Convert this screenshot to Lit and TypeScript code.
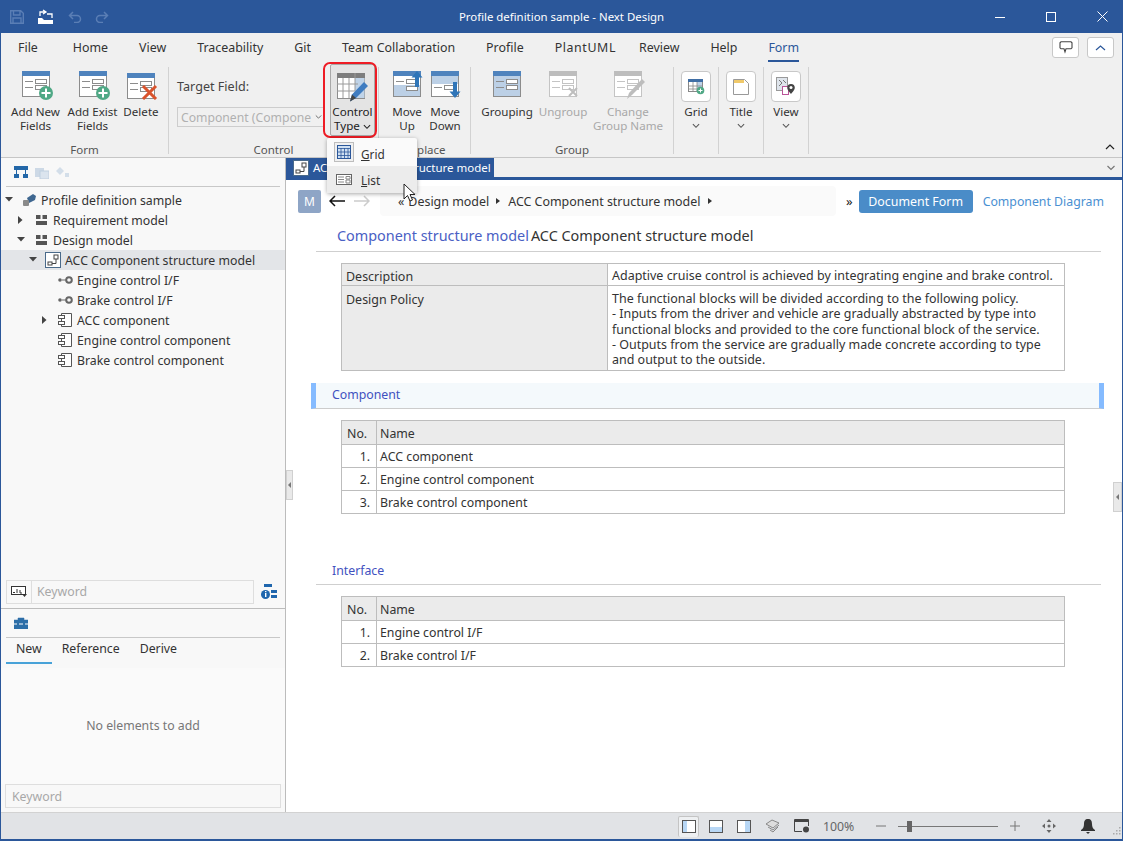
import { LitElement, html, css, svg } from "lit";
import { customElement } from "lit/decorators.js";

const formBase = (h: string, body: string, dim = false) => {
  const s = dim ? "#c4c4c4" : "#8c8c8c";
  return svg`<rect x=".5" y=".5" width="27" height="25" fill=${body} stroke=${s}/><rect x="0" y="0" width="28" height="5" fill=${h}/>
  <path d="M3 10.500h8M3 16.500h8" stroke=${s}/><rect x="13.500" y="8.500" width="11" height="4" fill="#fff" stroke=${s}/><rect x="13.500" y="14.500" width="11" height="4" fill="#fff" stroke=${s}/>`;
};
const plus = svg`<circle cx="24" cy="22" r="7" fill="#4fa885"/><path d="M24 17.500v9M19.500 22h9" stroke="#fff" stroke-width="2"/>`;
const icons: Record<string, unknown> = {
  addNew: html`<svg width="32" height="29" viewBox="0 0 32 29">${formBase("#4f83bd", "#fff")}${plus}</svg>`,
  addExist: html`<svg width="32" height="29" viewBox="0 0 32 29">${formBase("#4f83bd", "#fff")}${plus}</svg>`,
  del: html`<svg width="32" height="29" viewBox="0 0 32 29"><g transform="translate(0 2)">${formBase("#4f83bd", "#fff")}<path d="M16 13l13 13M29 13L16 26" stroke="#d9532c" stroke-width="3"/></g></svg>`,
  ctrl: html`<svg width="32" height="29" viewBox="0 0 32 29"><rect x=".5" y=".5" width="27" height="25" fill="#fff" stroke="#8d8d8d"/><rect width="28" height="5" fill="#7d7d7d"/><rect x="18" y="5" width="9.500" height="20" fill="#bfd3e8"/><path d="M0 11h21M0 18h18M6 5v20M12 5v20M18 0v18" stroke="#9a9a9a"/><path d="M13 28.500l2-7L27 9l4 4-12 12z" fill="#3f7cc0"/><path d="M13 28.500l2-7 4 3.500z" fill="#444"/></svg>`,
  up: html`<svg width="32" height="29" viewBox="0 0 32 29">${formBase("#4f83bd", "#fff")}<rect x="1" y="14" width="26" height="11" fill="#bcd0e6"/><rect x="13.500" y="15.500" width="11" height="4" fill="#fff" stroke="#8c8c8c"/><path d="M24 0l5.500 6.500h-3.500V16h-4V6.500H18.500z" fill="#2f75b8"/></svg>`,
  down: html`<svg width="32" height="29" viewBox="0 0 32 29">${formBase("#4f83bd", "#fff")}<rect x="1" y="5" width="26" height="8" fill="#bcd0e6"/><path d="M24 27l5.500-6.500h-3.500V11h-4v9.500H18.500z" fill="#2f75b8"/></svg>`,
  grp: html`<svg width="32" height="29" viewBox="0 0 32 29">${formBase("#4f83bd", "#bcd0e6")}</svg>`,
  ungrp: html`<svg width="32" height="29" viewBox="0 0 32 29">${formBase("#bdbdbd", "#fff", true)}<path d="M20 17l8 8M28 17l-8 8" stroke="#bdbdbd" stroke-width="2"/></svg>`,
  rename: html`<svg width="32" height="29" viewBox="0 0 32 29">${formBase("#bdbdbd", "#fff", true)}<path d="M13 28l2-6L28 8l3 3-13 13z" fill="#bdbdbd"/></svg>`,
  grid: html`<svg width="17" height="16" viewBox="0 0 17 16"><rect x=".5" y=".5" width="14" height="12" fill="#fff" stroke="#888"/><rect width="15" height="3" fill="#3f6ea5"/><rect x="9" y="3" width="5" height="9" fill="#bcd3ea"/><path d="M5 3v10M9 3v10M0 7h14M0 10h14" stroke="#888" stroke-width=".8"/><circle cx="12.500" cy="11.500" r="3.800" fill="#4fa885"/><path d="M12.500 9.500v4M10.500 11.500h4" stroke="#fff"/></svg>`,
  title: html`<svg width="16" height="16" viewBox="0 0 16 16"><path d="M.5.5h11l4 4v11H.5z" fill="#fff" stroke="#999"/><rect x="1" y="1" width="10" height="3" fill="#f0c96a"/></svg>`,
  view: html`<svg width="20" height="20" viewBox="0 0 20 20"><rect x=".5" y=".5" width="11" height="13" fill="#dfe5ec" stroke="#999"/><path d="M3 3l3 3-3 3M7 3l3 3" fill="none" stroke="#777"/><rect x="6.500" y="9.500" width="6" height="8" fill="#fff" stroke="#b59"/><path d="M15 7a3.800 3.800 0 0 1 3.800 3.800C18.800 13 15 17 15 17s-3.800-4-3.800-6.200A3.800 3.800 0 0 1 15 7z" fill="#444"/><circle cx="15" cy="10.500" r="1.500" fill="#fff"/></svg>`,
};

const groups = [
  { name: "Form", w: 168, pad: 6, items: [
    { t: ["Add New", "Fields"], i: "addNew", w: 57 }, { t: ["Add Exist", "Fields"], i: "addExist", w: 57 }, { t: ["Delete"], i: "del", w: 40 } ] },
  { name: "Control", w: 210, pad: 0, control: true, items: [] as any[] },
  { name: "Replace", w: 92, pad: 9, items: [ { t: ["Move", "Up"], i: "up", w: 38 }, { t: ["Move", "Down"], i: "down", w: 38 } ] },
  { name: "Group", w: 203, pad: 10, items: [ { t: ["Grouping"], i: "grp", w: 52 }, { t: ["Ungroup"], i: "ungrp", w: 60, dim: true }, { t: ["Change", "Group Name"], i: "rename", w: 70, dim: true } ] },
  { name: "", w: 45, pad: 0, boxed: { t: "Grid", i: "grid" }, items: [] },
  { name: "", w: 45, pad: 0, boxed: { t: "Title", i: "title" }, items: [] },
  { name: "", w: 45, pad: 0, boxed: { t: "View", i: "view" }, items: [] },
];

const chev = (c = "#333", w = 9) => html`<svg width=${w} height="6" viewBox="0 0 9 6"><path d="M1 1l3.500 3.500L8 1" fill="none" stroke=${c} stroke-width="1.200"/></svg>`;

const modelIcon = html`<svg width="13" height="12" viewBox="0 0 13 12"><path d="M1 1h4.500v4H1zM7.500 1H12v4H7.500zM1 7h11v4H1z" fill="#555"/></svg>`;
const ifaceIcon = html`<svg width="15" height="8" viewBox="0 0 15 8"><circle cx="2" cy="4" r="1.800" fill="#666"/><path d="M4 4h4" stroke="#666"/><circle cx="11" cy="4" r="2.800" fill="none" stroke="#666" stroke-width="2"/></svg>`;
const compIcon = html`<svg width="16" height="16" viewBox="0 0 16 16"><path d="M4.500 1.500h10v13h-10z" fill="#fff" stroke="#555"/><rect x="1.500" y="3.500" width="6" height="3" fill="#fff" stroke="#555"/><rect x="1.500" y="9.500" width="6" height="3" fill="#fff" stroke="#555"/></svg>`;
const diagIcon = html`<svg width="16" height="16" viewBox="0 0 16 16"><rect x=".5" y=".5" width="15" height="15" fill="#fff" stroke="#4a6a8a"/><rect x="9" y="3" width="4" height="4" fill="none" stroke="#444"/><rect x="3" y="10" width="4" height="3" fill="none" stroke="#444"/><path d="M11 7v4.500H7" fill="none" stroke="#444"/></svg>`;
const profIcon = html`<svg width="15" height="14" viewBox="0 0 15 14"><path d="M5 5l6-4 3 2-1 4-6 3z" fill="#3f6790"/><rect x="1" y="7" width="6" height="6" rx="1" fill="#8a8a8a"/></svg>`;

const tree = [
  { t: "Profile definition sample", d: 0, a: "down", ic: profIcon },
  { t: "Requirement model", d: 1, a: "right", ic: modelIcon },
  { t: "Design model", d: 1, a: "down", ic: modelIcon },
  { t: "ACC Component structure model", d: 2, a: "down", ic: diagIcon, sel: true },
  { t: "Engine control I/F", d: 3, a: "", ic: ifaceIcon },
  { t: "Brake control I/F", d: 3, a: "", ic: ifaceIcon },
  { t: "ACC component", d: 3, a: "right", ic: compIcon },
  { t: "Engine control component", d: 3, a: "", ic: compIcon },
  { t: "Brake control component", d: 3, a: "", ic: compIcon },
];

const tabs = ["File", "Home", "View", "Traceability", "Git", "Team Collaboration", "Profile", "PlantUML", "Review", "Help", "Form"];

@customElement("app-root")
export class AppRoot extends LitElement {
  static styles = css`
    :host { display: block; position: relative; width: 1123px; height: 841px; overflow: hidden; background: #fff; color: #222;
      font-family: "Noto Sans", "Open Sans", sans-serif; font-size: 12.300px; box-sizing: border-box; }
    .app { display: flex; flex-direction: column; height: 841px; border-left: 1px solid #2b579a; border-right: 1px solid #2b579a; border-bottom: 2px solid #2b579a; box-sizing: border-box; }
    .title { height: 33px; margin: 0 -1px; background: #2b579a; color: #fff; display: grid; grid-template-columns: 1fr auto 1fr; align-items: center; flex: none; font-size: 11.400px; }
    .qat { display: flex; gap: 13px; padding-left: 10px; align-items: center; }
    .win { display: flex; justify-content: flex-end; gap: 29px; padding-right: 15px; align-items: center; }
    .tabs { height: 29px; background: #f0f0f0; display: flex; align-items: center; flex: none; position: relative; padding-left: 17px; font-size: 12.400px; }
    .tab { margin-right: 31px; position: relative; height: 29px; line-height: 29px; color: #333; }
    .tab.first { margin-right: 35px; }
    .tab.pu { letter-spacing: .6px; margin-right: 23px; }
    .tab.on { color: #2b579a; }
    .tab.on::after { content: ""; position: absolute; left: 0; right: 0; bottom: 0; height: 2px; background: #2b579a; }
    .tr-btns { margin-left: auto; display: flex; gap: 8px; padding-right: 8px; }
    .tr-btn { width: 25px; height: 19px; background: #fff; border: 1px solid #c8c8c8; border-radius: 3px; display: flex; align-items: center; justify-content: center; }
    .ribbon { height: 96px; background: #f0f0f0; border-bottom: 1px solid #c6c6c6; display: flex; flex: none; position: relative; box-sizing: border-box; padding-top: 5px; }
    .group { display: flex; flex-direction: column; border-right: 1px solid #d2d2d2; box-sizing: border-box; height: 87px; flex: none; }
    .g-body { flex: 1; display: flex; align-items: flex-start; }
    .g-label { height: 8px; line-height: 8px; text-align: center; color: #555; font-size: 11.500px; margin-bottom: 0; }
    .rb { display: flex; flex-direction: column; align-items: center; padding-top: 4px; line-height: 14px; text-align: center; flex: none; white-space: nowrap; color: #333; font-size: 11.600px; }
    .rb svg { margin: 0 0 5px 4px; height: 29px; }
    .rb.dim { color: #a8a8a8; }
    .field { width: 150px; margin-left: 8px; flex: none; }
    .field-l { height: 40px; line-height: 40px; color: #444; font-size: 12.600px; }
    .select { height: 20px; width: 148px; border: 1px solid #cdcdcd; color: #b0b0b0; display: flex; align-items: center; justify-content: space-between; padding: 0 2px 0 3px; box-sizing: border-box; white-space: nowrap; overflow: hidden; font-size: 12.200px; }
    .ctrl { width: 45px; height: 72px; margin-left: 3px; border: 1px solid #a8a8a8; background: #e4e4e4; border-radius: 2px; box-sizing: border-box; padding-top: 8px; margin-top: -3px; display: flex; flex-direction: column; align-items: center; line-height: 14px; text-align: center; font-size: 11.600px; white-space: nowrap; }
    .ctrl-ic { display: block; height: 32px; }
    .boxed { width: 100%; display: flex; flex-direction: column; align-items: center; padding-top: 4px; font-size: 11.600px; line-height: 14px; color: #333; }
    .box { width: 28px; height: 29px; background: #fff; border: 1px solid #c8c8c8; border-radius: 4px; display: flex; align-items: center; justify-content: center; margin-bottom: 3px; }
    .boxed .c { margin-top: 0; height: 14px; display: flex; align-items: center; }
    .r-col { position: absolute; right: 7px; bottom: 3px; }
    .main { flex: 1; display: flex; min-height: 0; }
    .left { width: 284px; flex: none; border-right: 1px solid #bcbcbc; background: #f8f8f8; display: flex; flex-direction: column; }
    .l-tools { height: 28px; margin: 0 5px; border-bottom: 1px solid #c8c8c8; display: flex; align-items: center; gap: 7px; padding-left: 8px; flex: none; }
    .tree { height: 390px; padding-top: 3px; flex: none; box-sizing: content-box; margin-bottom: -1px; }
    .row { height: 20px; display: flex; align-items: center; white-space: nowrap; color: #333; }
    .row.sel { background: #e3e5e8; }
    .arr { width: 12px; height: 12px; margin-right: 5px; display: flex; align-items: center; justify-content: center; flex: none; }
    .ic { width: 18px; display: flex; align-items: center; justify-content: center; flex: none; margin-right: 3px; }
    .sbar { display: flex; align-items: center; height: 25px; padding-left: 5px; flex: none; }
    .kw { flex: none; height: 24px; border: 1px solid #dedede; box-sizing: border-box; display: flex; align-items: center; color: #a8a8a8; background: #f8f8f8; }
    .kw .abc { width: 24px; height: 22px; border-right: 1px solid #dedede; display: flex; align-items: center; justify-content: center; margin-right: 5px; }
    .splitter { height: 4px; border-bottom: 1px solid #bcbcbc; flex: none; box-sizing: content-box; }
    .ltabs { display: flex; margin: 0 5px; height: 26px; flex: none; }
    .ltab { padding: 0 10px; line-height: 22px; color: #333; }
    .ltab.on { border-bottom: 2px solid #48a2d8; box-sizing: border-box; height: 26px; }
    .empty { flex: 1; background: #fafafa; margin: 4px 0 0 0; color: #777; display: flex; align-items: center; justify-content: center; padding-bottom: 2px; }
    .kw2 { height: 24px; margin: 0 4px 4px 4px; border: 1px solid #dedede; box-sizing: border-box; color: #a8a8a8; display: flex; align-items: center; padding: 1px 0 0 6px; flex: none; }
    .doc { flex: 1; min-width: 0; display: flex; flex-direction: column; position: relative; }
    .dstrip { background: #f0f0f0; border-bottom: 3px solid #2b579a; box-sizing: content-box; display: flex; flex: none; height: 19px; }
    .dtab { width: 208px; background: #2b579a; color: #fff; display: flex; align-items: center; padding-left: 7px; gap: 2px; box-sizing: border-box; font-size: 11.500px; white-space: nowrap; height: 19px; }
    .dtab span { margin-left: 2px; }
    .dchev { margin-left: auto; padding: 0 6px; display: flex; align-items: center; }
    .nav { height: 30px; margin-top: 6px; display: flex; align-items: center; flex: none; }
    .m { width: 23px; height: 23px; margin-left: 12px; background: #8ea5c6; color: #fff; border-radius: 2px; text-align: center; line-height: 23px; font-size: 12px; }
    .arrows { display: flex; gap: 9px; margin: 0 10px 0 8px; }
    .crumb { width: 456px; height: 30px; background: #fafafa; border-radius: 4px; display: flex; align-items: center; padding-left: 18px; box-sizing: border-box; gap: 4px; color: #333; white-space: nowrap; font-size: 12.450px; }
    .tri { width: 0; height: 0; border-left: 4px solid #333; border-top: 3px solid transparent; border-bottom: 3px solid transparent; margin: 0 4px 0 3px; }
    .raquo { margin: 0 6px 0 10px; font-size: 13px; }
    .docbtn { width: 114px; height: 23px; background: #4a8cc8; border-radius: 3px; color: #fff; text-align: center; line-height: 23px; font-size: 12.400px; }
    .diag { margin-left: 10px; color: #4a90d2; font-size: 12.300px; white-space: nowrap; }
    .h1 { margin: 0 21px 0 30px; padding: 9px 0 5px 21px; border-bottom: 1px solid #cfcfcf; font-size: 14.400px; line-height: 21px; flex: none; display: flex; gap: 2px; color: #333; white-space: nowrap; }
    .h1 .a { color: #4a60c4; }
    table { border-collapse: collapse; margin-left: 55px; width: 724px; table-layout: fixed; font-size: 12.350px; flex: none; color: #333; }
    td { border: 1px solid #bdbdbd; padding: 0 4px; vertical-align: top; line-height: 15.200px; }
    td.h { background: #ebebeb; }
    .t1 { margin-top: 11px; font-size: 12.470px; }
    .t1 td { padding-top: 4px; padding-bottom: 2px; }
    .t1 td.h { padding-top: 5px; padding-bottom: 1px; }
    .t1 tr + tr td { padding-top: 5px; padding-bottom: 3px; }
    .t1 tr + tr td.h { padding-top: 6px; }
    .t2 td { height: 23px; box-sizing: border-box; padding: 0 3px; vertical-align: middle; }
    .t2 td.h { height: 24px; padding-top: 1px; }
    .t2 td.n { text-align: right; padding-right: 6px; }
    .t2 td.no { padding-left: 5px; }
    .sec { margin: 12px 18px 0 25px; height: 26px; background: #f4f9fc; border-left: 5px solid #85bbff; border-right: 5px solid #85bbff; border-bottom: 1px solid #ccc; box-sizing: border-box; line-height: 23px; padding-left: 16px; color: #3f51c0; flex: none; }
    .t-a { margin-top: 11px; }
    .sec2 { margin: 45px 21px 0 30px; border-bottom: 1px solid #cfcfcf; box-sizing: content-box; line-height: 24px; padding-left: 16px; color: #3f51c0; flex: none; height: 25px; }
    .t-b { margin-top: 11px; }
    .grab { position: absolute; width: 7px; height: 30px; background: #e9e9e9; border: 1px solid #d0d0d0; box-sizing: border-box; display: flex; align-items: center; justify-content: center; }
    .grab i { width: 0; height: 0; border-right: 3px solid #777; border-top: 3px solid transparent; border-bottom: 3px solid transparent; }
    .g1 { left: 0; top: 312px; }
    .g2 { right: 0; top: 324px; width: 9px; }
    .status { height: 27px; background: #e1e3e6; display: flex; align-items: center; flex: none; border-top: 1px solid #d2d2d2; box-sizing: border-box; position: relative; padding-left: 677px; color: #555; }
    .act { width: 21px; height: 21px; background: #eef0f2; border: 1px solid #c4c4c4; border-bottom: none; border-radius: 2px; box-sizing: border-box; display: flex; align-items: center; justify-content: center; margin-right: 3px; }
    .st-i { display: flex; align-items: center; justify-content: center; flex: none; }
    .w28 { width: 28px; }
    .w30 { width: 30px; }
    .w27 { width: 27px; }
    .w14 { width: 14px; margin-left: 15px; }
    .pct { margin-left: 8px; width: 36px; color: #666; }
    .track { width: 100px; height: 1px; background: #777; position: relative; margin-left: 10px; }
    .thumb { position: absolute; left: 9px; top: -5px; width: 5px; height: 11px; background: #666; }
    .ml12 { margin-left: 12px; }
    .ml22 { margin-left: 22px; }
    .ml25 { margin-left: 25px; }
    .grip { margin-left: 18px; margin-top: 10px; }
    .hl { position: absolute; left: 323px; top: 62px; width: 54px; height: 76px; border: 2px solid #ee1c25; border-radius: 7px; box-sizing: border-box; pointer-events: none; }
    .menu { position: absolute; left: 327px; top: 138px; width: 90px; height: 55px; background: #fafafa; box-shadow: 0 1px 4px rgba(0,0,0,.35); border-radius: 2px; display: flex; flex-direction: column; }
    .mi { height: 28px; display: flex; align-items: center; font-size: 11.800px; color: #333; }
    .mi:first-child span:last-child { padding-top: 3px; }
    .mi:nth-child(2) { background: #ececec; height: 27px; }
    .mi-ic { width: 20px; height: 20px; margin: 0 7px 0 7px; display: flex; align-items: center; justify-content: center; box-sizing: border-box; }
    .mi-ic.on { background: #f0f0f0; border: 1px solid #bdbdbd; }
    .cursor { position: absolute; left: 403px; top: 183px; }
  `;

  private group(g: any) {
    return html`<div class="group" style="width:${g.w}px">
      <div class="g-body" style="padding-left:${g.pad}px">
        ${g.control ? html`<div class="field"><div class="field-l">Target Field:</div><div class="select"><span>Component (Compone</span>${chev("#666", 7)}</div></div>
          <div class="ctrl"><span class="ctrl-ic">${icons.ctrl}</span><span>Control</span><span>Type ${chev("#222", 8)}</span></div>` : ""}
        ${g.items.map((b: any) => html`<div class="rb ${b.dim ? "dim" : ""}" style="width:${b.w}px">${icons[b.i]}${b.t.map((l: string) => html`<span>${l}</span>`)}</div>`)}
        ${g.boxed ? html`<div class="boxed"><div class="box">${icons[g.boxed.i]}</div><span>${g.boxed.t}</span><span class="c">${chev("#555", 8)}</span></div>` : ""}
      </div>
      <div class="g-label">${g.name}</div>
    </div>`;
  }

  render() {
    return html`<div class="app">
      <div class="title">
        <div class="qat">
          <svg width="14" height="14" viewBox="0 0 14 14"><path d="M.7.7h10l2.600 2.600v10H.7zM3.500 1v4h6.500V1M3 13V8h8v5" fill="none" stroke="#5a7eb5" stroke-width="1.400"/></svg>
          <svg width="18" height="16" viewBox="0 0 18 16"><path d="M1 9h4l2 2h9v4H1z" fill="#fff"/><path d="M3 7V3h5M6 1l3 2-3 2M10 5h5v4" fill="none" stroke="#fff" stroke-width="1.300"/></svg>
          <svg width="14" height="12" viewBox="0 0 14 12"><path d="M5 1L1.500 4.500 5 8M2 4.500h7a3.500 3.500 0 0 1 0 7H6" fill="none" stroke="#5a7eb5" stroke-width="1.500"/></svg>
          <svg width="14" height="12" viewBox="0 0 14 12"><path d="M9 1l3.500 3.500L9 8M12 4.500H5a3.500 3.500 0 0 0 0 7h3" fill="none" stroke="#5a7eb5" stroke-width="1.500"/></svg>
        </div>
        <div>Profile definition sample - Next Design</div>
        <div class="win">
          <svg width="10" height="10" viewBox="0 0 10 10"><path d="M0 5.500h10" stroke="#fff"/></svg>
          <svg width="34" height="10" viewBox="0 0 34 10"><rect x="12.500" y=".5" width="9" height="9" fill="none" stroke="#fff"/></svg>
          <svg width="11" height="11" viewBox="0 0 11 11"><path d="M.5.5l10 10M10.500.5l-10 10" stroke="#fff"/></svg>
        </div>
      </div>
      <div class="tabs">
        ${tabs.map((t, i) => html`<div class="tab ${i === 0 ? "first" : ""} ${t === "Form" ? "on" : ""} ${t === "PlantUML" ? "pu" : ""}">${t}</div>`)}
        <div class="tr-btns">
          <div class="tr-btn"><svg width="14" height="13" viewBox="0 0 14 13"><path d="M2 .8h10l1 1v5l-1 1H7L6 11 5 7.800H2l-1-1v-5z" fill="none" stroke="#444" stroke-width="1.100"/></svg></div>
          <div class="tr-btn"><svg width="11" height="6" viewBox="0 0 11 6"><path d="M1 5l4.500-4L10 5" fill="none" stroke="#2b579a" stroke-width="1.200"/></svg></div>
        </div>
      </div>
      <div class="ribbon">
        ${groups.map((g) => this.group(g))}
        <div class="r-col"><svg width="10" height="6" viewBox="0 0 10 6"><path d="M1 5l4-4 4 4" fill="none" stroke="#222" stroke-width="1.200"/></svg></div>
      </div>
      <div class="main">
        <div class="left">
          <div class="l-tools">
            <svg width="14" height="12" viewBox="0 0 14 12"><path d="M0 0h14v4H0zM0 8h5v4H0zM9 8h5v4H9zM2 4h1v4H2zM11 4h1v4h-1z" fill="#2367a8"/></svg>
            <svg width="14" height="13" viewBox="0 0 14 13"><rect x="0" y="2" width="9" height="9" fill="#cdd9e6"/><rect x="5" y="5" width="9" height="8" fill="#dbe4ee" stroke="#c0cfdf"/></svg>
            <svg width="14" height="13" viewBox="0 0 14 13"><path d="M0 5l4-4 4 4-4 4zM9 7h4v4H9z" fill="#d3dee9"/></svg>
          </div>
          <div class="tree">
            ${tree.map((r) => html`<div class="row ${r.sel ? "sel" : ""}" style="padding-left:${2 + r.d * 12}px">
              <span class="arr">${r.a === "down" ? html`<svg width="9" height="6" viewBox="0 0 9 6"><path d="M0 0h8L4 4.500z" fill="#444"/></svg>` : r.a === "right" ? html`<svg width="6" height="9" viewBox="0 0 6 9"><path d="M0 0l4.500 4L0 8z" fill="#444"/></svg>` : ""}</span>
              <span class="ic">${r.ic}</span><span>${r.t}</span></div>`)}
          </div>
          <div class="sbar">
            <div class="kw" style="width:248px"><span class="abc"><svg width="16" height="11" viewBox="0 0 16 11"><rect x=".5" y=".5" width="14" height="8" fill="#fff" stroke="#333"/><path d="M2 6.500h2M6 3v4M9 4v3h2" stroke="#333" fill="none"/><path d="M11 8h5l-2.500 3z" fill="#333"/></svg></span>Keyword</div>
            <svg width="16" height="16" viewBox="0 0 16 16" style="margin-left:7px"><path d="M3 0h8v3H3zM10 6h6v3h-6zM10 11h6v3h-6z" fill="#1f66ad"/><circle cx="4.500" cy="10.500" r="4.500" fill="#1f66ad"/><rect x="4" y="9" width="1.400" height="4" fill="#fff"/><rect x="4" y="7" width="1.400" height="1.200" fill="#fff"/></svg>
          </div>
          <div class="splitter"></div>
          <div class="l-tools"><svg width="14" height="12" viewBox="0 0 14 12"><path d="M4 3V1h6v2M0 3h14v9H0z" fill="#2d6fa8" stroke="#2d6fa8" stroke-width=".5"/><path d="M0 7h3M5 7h4M11 7h3" stroke="#fff"/></svg></div>
          <div class="ltabs"><div class="ltab on">New</div><div class="ltab">Reference</div><div class="ltab">Derive</div></div>
          <div class="empty">No elements to add</div>
          <div class="kw2">Keyword</div>
        </div>
        <div class="doc">
          <div class="dstrip">
            <div class="dtab">${diagIcon}<span>ACC Component structure model</span></div>
            <span class="dchev">${chev("#777", 10)}</span>
          </div>
          <div class="nav">
            <div class="m">M</div>
            <div class="arrows">
              <svg width="16" height="12" viewBox="0 0 16 12"><path d="M6 1L1 6l5 5M1 6h15" fill="none" stroke="#111" stroke-width="1.500"/></svg>
              <svg width="16" height="12" viewBox="0 0 16 12"><path d="M10 1l5 5-5 5M15 6H0" fill="none" stroke="#ccc" stroke-width="1.500"/></svg>
            </div>
            <div class="crumb"><span>«</span><span>Design model</span><i class="tri"></i><span>ACC Component structure model</span><i class="tri"></i></div>
            <span class="raquo">»</span>
            <div class="docbtn">Document Form</div>
            <div class="diag">Component Diagram</div>
          </div>
          <div class="h1"><span class="a">Component structure model</span><span>ACC Component structure model</span></div>
          <table class="t1"><colgroup><col style="width:266px"/><col/></colgroup>
            <tr><td class="h">Description</td><td>Adaptive cruise control is achieved by integrating engine and brake control.</td></tr>
            <tr><td class="h">Design Policy</td><td>The functional blocks will be divided according to the following policy.<br/>- Inputs from the driver and vehicle are gradually abstracted by type into functional blocks and provided to the core functional block of the service.<br/>- Outputs from the service are gradually made concrete according to type and output to the outside.</td></tr>
          </table>
          <div class="sec">Component</div>
          <table class="t2 t-a"><colgroup><col style="width:35px"/><col/></colgroup>
            <tr><td class="h no">No.</td><td class="h">Name</td></tr>
            <tr><td class="n">1.</td><td>ACC component</td></tr>
            <tr><td class="n">2.</td><td>Engine control component</td></tr>
            <tr><td class="n">3.</td><td>Brake control component</td></tr>
          </table>
          <div class="sec2">Interface</div>
          <table class="t2 t-b"><colgroup><col style="width:35px"/><col/></colgroup>
            <tr><td class="h no">No.</td><td class="h">Name</td></tr>
            <tr><td class="n">1.</td><td>Engine control I/F</td></tr>
            <tr><td class="n">2.</td><td>Brake control I/F</td></tr>
          </table>
          <div class="grab g1"><i></i></div>
          <div class="grab g2"><i></i></div>
        </div>
      </div>
      <div class="status">
        <div class="act"><svg width="14" height="13" viewBox="0 0 14 13"><rect x=".5" y=".5" width="13" height="12" fill="#fff" stroke="#555"/><rect x="1" y="1" width="4" height="11" fill="#b8d7f5"/></svg></div>
        <span class="st-i w28"><svg width="14" height="13" viewBox="0 0 14 13"><rect x=".5" y=".5" width="13" height="12" fill="#fff" stroke="#555"/><rect x="1" y="7" width="12" height="5" fill="#b8d7f5"/></svg></span>
        <span class="st-i w28"><svg width="14" height="13" viewBox="0 0 14 13"><rect x=".5" y=".5" width="13" height="12" fill="#fff" stroke="#555"/><rect x="8" y="1" width="5" height="11" fill="#b8d7f5"/></svg></span>
        <span class="st-i w30"><svg width="16" height="14" viewBox="0 0 16 14"><path d="M1 5l6-4 7 3-6 5z" fill="#ddd" stroke="#888"/><path d="M3 8l5 3 6-5M5 11l3 2 5-5" fill="none" stroke="#888"/></svg></span>
        <span class="st-i w27"><svg width="16" height="14" viewBox="0 0 16 14"><path d="M8 12.500H.5V.5h14V7" fill="none" stroke="#444"/><rect x="1" y="1" width="13" height="2" fill="#444"/><circle cx="12" cy="10.500" r="3" fill="#444"/></svg></span>
        <span class="pct">100%</span>
        <span class="st-i w14"><svg width="10" height="2" viewBox="0 0 10 2"><path d="M0 1h10" stroke="#777"/></svg></span>
        <div class="track"><div class="thumb"></div></div>
        <span class="st-i ml12"><svg width="10" height="10" viewBox="0 0 10 10"><path d="M0 5h10M5 0v10" stroke="#777"/></svg></span>
        <span class="st-i ml22"><svg width="14" height="14" viewBox="0 0 14 14"><path d="M7 0l2.500 3h-5zM7 14l2.500-3h-5zM0 7l3-2.500v5zM14 7l-3-2.500v5z" fill="#666"/><circle cx="7" cy="7" r="1.500" fill="#666"/></svg></span>
        <span class="st-i ml25"><svg width="14" height="15" viewBox="0 0 14 15"><path d="M7 0c3 0 4 2 4 5 0 3 1 5 3 6v1H0v-1c2-1 3-3 3-6 0-3 1-5 4-5z" fill="#333"/><path d="M5 13h4l-2 2z" fill="#333"/></svg></span>
        <span class="st-i grip"><svg width="8" height="8" viewBox="0 0 8 8"><path d="M6 0h1.500v1.500H6zM3 3h1.500v1.500H3zM6 3h1.500v1.500H6zM0 6h1.500v1.500H0zM3 6h1.500v1.500H3zM6 6h1.500v1.500H6z" fill="#aaa"/></svg></span>
      </div>
      <div class="hl"></div>
      <div class="menu">
        <div class="mi"><span class="mi-ic on"><svg width="14" height="14" viewBox="0 0 14 14"><rect x=".5" y=".5" width="13" height="13" fill="#cfe0f2" stroke="#2b579a"/><path d="M0 3.500h14M.5 7h13M.5 10.500h13M4 3v11M7.500 3v11M11 3v11" stroke="#2b579a" stroke-width=".8"/></svg></span><span><u>G</u>rid</span></div>
        <div class="mi"><span class="mi-ic"><svg width="16" height="11" viewBox="0 0 16 11"><rect x=".5" y=".5" width="15" height="10" fill="#fff" stroke="#666"/><path d="M2 3h6M2 5.500h6M2 8h6M10 2.500h4v2.500h-4zM10 6h4v3h-4z" stroke="#888" fill="none"/></svg></span><span><u>L</u>ist</span></div>
      </div>
      <svg class="cursor" width="14" height="20" viewBox="0 0 14 20"><path d="M1 1v15l3.500-3.500L7 18l2.500-1-2.500-5.500h5z" fill="#fff" stroke="#222"/></svg>
    </div>`;
  }
}
